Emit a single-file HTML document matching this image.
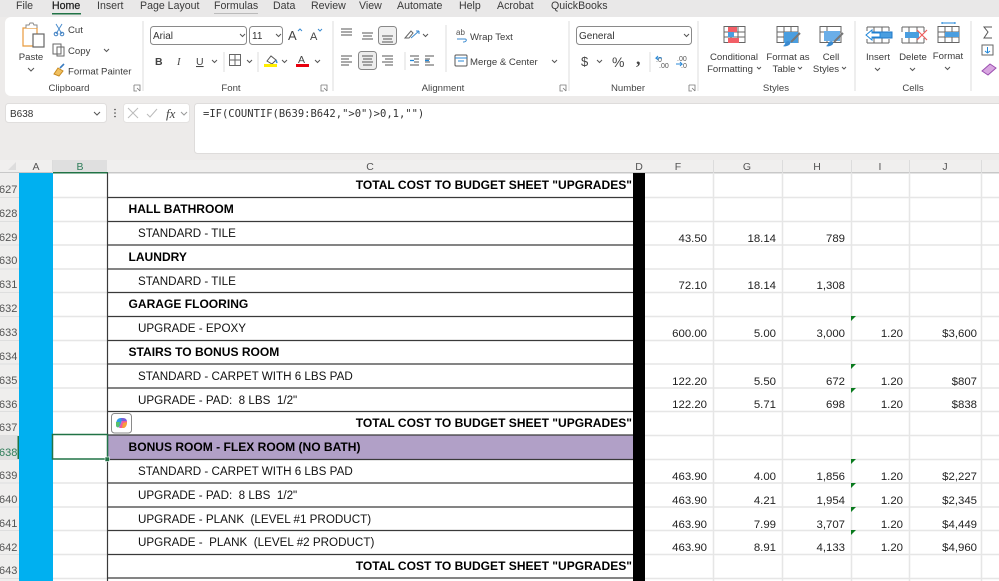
<!DOCTYPE html>
<html><head><meta charset="utf-8"><style>
html,body{margin:0;padding:0;background:#fff;width:999px;height:581px;overflow:hidden}
svg{display:block;font-family:"Liberation Sans",sans-serif}
.u{font-size:9.6px;fill:#3c3c3c}
.t{font-size:10.6px;fill:#3a3a3a}
.g{font-size:9.6px;fill:#444;text-anchor:middle}
.c{font-size:10.5px;fill:#555;text-anchor:middle}
.r{font-size:11px;fill:#555}
.b{font-size:12.05px;font-weight:bold;fill:#000}
.l{font-size:11.65px;fill:#111}
.n{font-size:11.4px;fill:#222;text-anchor:end}
.ic{fill:none;stroke:#555;stroke-width:1}
.gl{stroke:#e6e6e6;stroke-width:1.5}
.bl{stroke:#3a3a3a;stroke-width:1.2}
.sep{stroke:#dcdcdc;stroke-width:1}
.tri{fill:#0a7a1e}
</style></head><body>
<svg width="999" height="581" viewBox="0 0 999 581" xmlns="http://www.w3.org/2000/svg">
<rect width="999" height="160" fill="#edebea"/>
<rect y="0" width="999" height="17" fill="#e9e8e8"/>
<g class="t">
<text x="16" y="9">File</text><text x="52" y="9" style="fill:#222;stroke:#222;stroke-width:.25">Home</text><text x="97" y="9">Insert</text><text x="140" y="9">Page Layout</text><text x="214" y="9">Formulas</text><text x="273" y="9">Data</text><text x="311" y="9">Review</text><text x="359" y="9">View</text><text x="397" y="9">Automate</text><text x="459" y="9">Help</text><text x="497" y="9">Acrobat</text><text x="551" y="9">QuickBooks</text>
</g>
<rect x="52" y="13" width="29" height="1.5" fill="#217346"/>
<rect x="214" y="13" width="44" height="1" fill="#bbb"/>
<rect x="5" y="17" width="1010" height="79" rx="6" fill="#fff"/>
<g class="sep"><path d="M143 21V91M333 21V91M569 21V91M698 21V91M855 21V91M971 21V91"/></g>

<!-- Clipboard -->
<path d="M23 28h14v18h-14z" fill="none" stroke="#e89a3c" stroke-width="1.2"/>
<path d="M26 28v-3h3l1-2h3l1 2h3v3" fill="#fff" stroke="#888"/>
<rect x="33" y="34" width="11" height="13" fill="#fff" stroke="#666" stroke-width="1.2"/>
<text class="u" x="31" y="60" text-anchor="middle">Paste</text>
<path d="M28 68l3 3 3-3" class="ic"/>
<path d="M56 24l6 10M62 24l-6 10" stroke="#4a8ccc" fill="none"/><circle cx="56" cy="34" r="1.8" fill="none" stroke="#3a7cc0"/><circle cx="62" cy="34" r="1.8" fill="none" stroke="#3a7cc0"/>
<text class="u" x="68" y="33">Cut</text>
<path d="M53 44h8v10h-8zM57 47h7v9h-7z" fill="#fff" stroke="#666"/>
<text class="u" x="68" y="54">Copy</text><path d="M104 49l2.5 2.5 2.5-2.5" class="ic"/>
<path d="M54 74l4-6 5 3-4 5z" fill="#f0c060" stroke="#c88a20"/><path d="M60 68l4-4" stroke="#3a7cc0" stroke-width="1.6"/>
<text class="u" x="68" y="74.500">Format Painter</text>
<text class="g" x="69" y="91">Clipboard</text>
<path d="M134 85h6v6M134 85v6h3M137 88l3 3" fill="none" stroke="#777" stroke-width=".8"/>

<!-- Font -->
<rect x="150.500" y="26.500" width="96" height="18" rx="3" fill="#fff" stroke="#8a8a8a"/>
<text x="153" y="39" style="font-size:10px;fill:#333">Arial</text><path d="M240 34l2.500 2.500 2.500-2.500" class="ic"/>
<rect x="249.500" y="26.500" width="33" height="18" rx="3" fill="#fff" stroke="#8a8a8a"/>
<text x="252" y="39" style="font-size:10px;fill:#333">11</text><path d="M276 34l2.500 2.500 2.500-2.500" class="ic"/>
<text x="288" y="40" style="font-size:13px;fill:#444">A</text><path d="M298 31l2-2 2 2" stroke="#3a8ad0" fill="none"/>
<text x="310" y="40" style="font-size:11px;fill:#444">A</text><path d="M318 29l2 2 2-2" stroke="#3a8ad0" fill="none"/>
<text x="155" y="65" style="font-size:10.500px;font-weight:bold;fill:#444">B</text>
<text x="177" y="65" style="font-size:10.500px;font-style:italic;fill:#444;font-family:'Liberation Serif',serif">I</text>
<text x="196" y="65" style="font-size:10.500px;fill:#444;text-decoration:underline">U</text><path d="M212 60l2.500 2.500 2.500-2.500" class="ic"/>
<path d="M224 52V72" stroke="#ddd"/>
<path d="M229.500 54.500h11v11h-11zM235 54.500v11M229.500 60h11" fill="none" stroke="#666"/><path d="M247 60l2.500 2.500 2.500-2.500" class="ic"/>
<path d="M258 52V72" stroke="#ddd"/>
<path d="M267 61l4-5 5 4-4 4z" fill="#fff" stroke="#555"/><path d="M276 60l1 3" stroke="#3a8ad0" stroke-width="1.500"/><rect x="264" y="64" width="13" height="3" fill="#ffee00"/>
<path d="M282 60l2.500 2.500 2.500-2.500" class="ic"/>
<text x="298" y="63" style="font-size:10.500px;fill:#444">A</text><rect x="296" y="64" width="13" height="3" fill="#e8000d"/>
<path d="M315 60l2.500 2.500 2.500-2.500" class="ic"/>
<text class="g" x="231" y="91">Font</text>
<path d="M321 85h6v6M321 85v6h3M324 88l3 3" fill="none" stroke="#777" stroke-width=".8"/>

<!-- Alignment -->
<g stroke="#555" fill="none">
<path d="M341 30h11M341 33h11M341 36h11" stroke-width=".9" transform="translate(0,-1)"/>
<path d="M362 33h11M363 36h9M362 39h11" stroke-width=".9"/>
<rect x="378.500" y="26.500" width="18" height="18" rx="3" fill="#f0f0f0" stroke="#888"/>
<path d="M382 36h11M383 39h9M382 42h11" stroke-width=".9"/>
<path d="M341 56h11M341 59h8M341 62h11M341 65h8" stroke-width=".9"/>
<rect x="358.500" y="51.500" width="18" height="18" rx="3" fill="#ededed" stroke="#888"/>
<path d="M362 56h11M363 59h9M362 62h11M363 65h9" stroke-width=".9"/>
<path d="M382 56h11M385 59h8M382 62h11M385 65h8" stroke-width=".9"/>
<path d="M405 52V70" stroke="#ddd"/>
<path d="M410 56h9M414 59h5M414 62h5M410 65h9M425 56h9M425 59h5M425 62h5M425 65h9" stroke-width=".9"/>
<path d="M405 38l6-7 2 2-4 5z" stroke="#666"/><path d="M411 38l8-7M419 31h-3M419 31v3" stroke="#3a8ad0"/>
<path d="M423 34l2.500 2.500 2.500-2.500"/>
</g>
<path d="M410 60.500h4M425 60.500h4" stroke="#1f86d8" stroke-width="1.200"/>
<path d="M446 25V72" stroke="#ddd"/>
<text x="456" y="35" style="font-size:8px;fill:#555">ab</text><path d="M457 39h8M465 39c2 0 2 3-2 3" stroke="#3a8ad0" fill="none"/>
<text x="470" y="40" class="u">Wrap Text</text>
<rect x="455" y="55" width="12" height="11" rx="1" fill="#fff" stroke="#555"/><path d="M455 58h12M458 61h6" stroke="#2a8ad8"/>
<text x="470" y="65" class="u">Merge &amp; Center</text><path d="M552 60l2.500 2.500 2.500-2.500" class="ic"/>
<text class="g" x="443" y="91">Alignment</text>
<path d="M560 85h6v6M560 85v6h3M563 88l3 3" fill="none" stroke="#777" stroke-width=".8"/>

<!-- Number -->
<rect x="576.500" y="26.500" width="115" height="18" rx="3" fill="#fff" stroke="#8a8a8a"/>
<text x="579" y="39" style="font-size:10px;fill:#333">General</text><path d="M684 34l2.500 2.500 2.500-2.500" class="ic"/>
<text x="581" y="66" style="font-size:13px;fill:#444">$</text><path d="M597 60l2.500 2.500 2.500-2.500" class="ic"/>
<text x="612" y="67" style="font-size:14px;fill:#444">%</text>
<text x="636" y="64" style="font-size:18px;font-weight:bold;fill:#444;font-family:'Liberation Serif',serif">,</text>
<path d="M650 52V72" stroke="#ddd"/>
<text x="656" y="62" style="font-size:7px;fill:#555">.0</text><text x="659" y="68" style="font-size:7px;fill:#555">.00</text><path d="M662 58h-6l2-2M656 58l2 2" stroke="#2a8ad8" fill="none"/>
<text x="677" y="61" style="font-size:7px;fill:#555">.00</text><text x="681" y="68" style="font-size:7px;fill:#555">.0</text><path d="M676 64h6l-2-2M682 64l-2 2" stroke="#2a8ad8" fill="none"/>
<text class="g" x="628" y="91">Number</text>
<path d="M689 85h6v6M689 85v6h3M692 88l3 3" fill="none" stroke="#777" stroke-width=".8"/>

<!-- Styles -->
<g stroke="#666" fill="none">
<path d="M724 26.500h21v16h-21zM731 26.500v16M738 26.500v16M724 32h21M724 37h21"/>
<rect x="728" y="27" width="9" height="5" fill="#f25f67" stroke="none"/><rect x="728" y="32" width="6" height="5" fill="#4a9ee0" stroke="none"/><rect x="728" y="38" width="11" height="5" fill="#f25f67" stroke="none"/>
<path d="M777 26.500h21v16h-21zM784 26.500v16M791 26.500v16M777 32h21M777 37h21"/>
<rect x="784" y="32" width="14" height="11" fill="#4a9ee0" stroke="none"/>
<path d="M800 33l-9 9" stroke="#777" stroke-width="2"/><path d="M786 42c3-2 5 0 4 2s-6 3-7 2c2-1 2-3 3-4z" fill="#3a8ad0" stroke="none"/>
<path d="M820 26.500h21v16h-21zM827 26.500v16M820 32h21"/>
<rect x="824" y="31" width="16" height="10" fill="#6aaee8" stroke="none"/>
<path d="M843 33l-9 9" stroke="#777" stroke-width="2"/><path d="M829 42c3-2 5 0 4 2s-6 3-7 2c2-1 2-3 3-4z" fill="#3a8ad0" stroke="none"/>
</g>
<g class="u" text-anchor="middle">
<text x="734" y="60">Conditional</text><text x="730" y="72">Formatting</text>
<text x="788" y="60">Format as</text><text x="784" y="72">Table</text>
<text x="831" y="60">Cell</text><text x="826" y="72">Styles</text>
</g>
<path d="M757 67l2 2 2-2M798 67l2 2 2-2M842 67l2 2 2-2" class="ic"/>
<text class="g" x="776" y="91">Styles</text>

<!-- Cells -->
<g stroke="#666" fill="none">
<path d="M867 27h22M867 43h22M867 27v4M889 27v4M867 39v4M889 39v4M874 27v16M882 27v16"/>
<rect x="873" y="32" width="19" height="6" fill="#4a9ee0" stroke="#1f78c8"/>
<path d="M866 35l6-5v3h8v4h-8v3z" fill="#fff" stroke="#1f86d8"/>
<path d="M902 27h22M902 43h22M902 27v5M924 27v5M902 38v5M924 38v5M909 27v16M917 27v16"/>
<rect x="905" y="32" width="14" height="6" fill="#4a9ee0" stroke="none"/>
<path d="M917 30l10 10M927 30l-10 10" stroke="#ee5c5c" stroke-width="1.200"/>
<path d="M938 26.500h21v16h-21zM945 26.500v16M952 26.500v16M938 32h21M938 37h21"/>
<rect x="945" y="32" width="14" height="5" fill="#4a9ee0" stroke="none"/>
<path d="M942 23h13M942 22v2M955 22v2" stroke="#1f86d8"/>
</g>
<g class="u" text-anchor="middle"><text x="878" y="60">Insert</text><text x="913" y="60">Delete</text><text x="948" y="59">Format</text></g>
<path d="M875 68l2.500 2.500 2.500-2.500M910 68l2.500 2.500 2.500-2.500M945 67l2.500 2.500 2.500-2.500" class="ic"/>
<text class="g" x="913" y="91">Cells</text>

<!-- Editing -->
<path d="M992 27h-8l4 5-4 6h8" fill="none" stroke="#555"/>
<rect x="982" y="45" width="11" height="10" fill="#fff" stroke="#666"/><path d="M987.500 47v6M985 51l2.500 2 2.500-2" stroke="#1f86d8" fill="none"/>
<path d="M982 71l8-7 6 4-8 7z" fill="#d8a6e0" stroke="#9a4fb0"/>

<!-- Formula bar -->
<rect x="5.500" y="103.500" width="101" height="19" rx="3" fill="#fff" stroke="#e0dedd"/>
<text x="10" y="117" style="font-size:10px;fill:#333">B638</text><path d="M94 112l3 3 3-3" class="ic"/>
<circle cx="115" cy="109.500" r=".8" fill="#444"/><circle cx="115" cy="113" r=".8" fill="#444"/><circle cx="115" cy="116.500" r=".8" fill="#444"/>
<rect x="123.500" y="103.500" width="66" height="19" rx="3" fill="#fff" stroke="#e4e2e1"/>
<path d="M128 108l10 10M138 108l-10 10M147 114l3 3 7-8" fill="none" stroke="#bbb"/>
<text x="166" y="118" style="font-size:13px;font-style:italic;fill:#444;font-family:'Liberation Serif',serif">fx</text><path d="M181 112l3 3 3-3" fill="none" stroke="#999"/>
<rect x="194.500" y="103.500" width="830" height="50" rx="3" fill="#fff" stroke="#dedcdb"/>
<text x="203" y="117" style="font-family:'DejaVu Sans Mono',monospace;font-size:10.500px;fill:#333">=IF(COUNTIF(B639:B642,"&gt;0")&gt;0,1,"")</text>

<!-- Column headers -->
<rect y="160" width="999" height="13" fill="#f0efee"/>
<rect x="0" y="172" width="999" height="1.500" fill="#c8c8c8"/>
<path d="M16 162v8h-8z" fill="#ddd"/>
<rect x="53" y="160" width="54" height="13" fill="#dfdfdf"/>
<rect x="53" y="172" width="55" height="1.500" fill="#217346"/>
<path d="M52.500 160v13M713.500 160v13M782.500 160v13M851.500 160v13M909.500 160v13M981.500 160v13" stroke="#dcdcdc"/>
<text class="c" x="36" y="170">A</text><text class="c" x="80" y="170" style="fill:#2f7d5a">B</text><text class="c" x="370" y="170">C</text><text class="c" x="639" y="170">D</text><text class="c" x="678" y="170">F</text><text class="c" x="747" y="170">G</text><text class="c" x="817" y="170">H</text><text class="c" x="880" y="170">I</text><text class="c" x="945" y="170">J</text>

<!-- Row headers -->
<rect x="0" y="173" width="19" height="408" fill="#efeeed"/>
<rect x="0" y="435" width="18" height="24" fill="#dfdfdf"/>
<rect x="17.500" y="435" width="1.500" height="24" fill="#217346"/>
<g class="r">
<text x="-1" y="193">627</text><text x="-1" y="217">628</text><text x="-1" y="241">629</text><text x="-1" y="264">630</text><text x="-1" y="288">631</text><text x="-1" y="312">632</text><text x="-1" y="336">633</text><text x="-1" y="360">634</text><text x="-1" y="384">635</text><text x="-1" y="408">636</text><text x="-1" y="431">637</text><text x="-1" y="456" style="fill:#2f7d5a">638</text><text x="-1" y="479">639</text><text x="-1" y="503">640</text><text x="-1" y="527">641</text><text x="-1" y="551">642</text><text x="-1" y="574">643</text>
</g>
<path class="sep" d="M0 197.500h19M0 221.500h19M0 245h19M0 269h19M0 292.500h19M0 316.500h19M0 340.500h19M0 364h19M0 388h19M0 411.500h19M0 435.500h19M0 459.500h19M0 483h19M0 507h19M0 530.500h19M0 554.500h19M0 578.500h19" style="stroke:#dedede"/>

<!-- Blue column A -->
<rect x="19" y="173" width="34" height="408" fill="#00b0f0"/>

<!-- Gridlines -->
<g class="gl">
<path d="M53 197.500h54M53 221.500h54M53 245h54M53 269h54M53 292.500h54M53 316.500h54M53 340.500h54M53 364h54M53 388h54M53 411.500h54M53 483h54M53 507h54M53 530.500h54M53 554.500h54M53 578.500h54"/>
<path d="M645 197.500h354M645 221.500h354M645 245h354M645 269h354M645 292.500h354M645 316.500h354M645 340.500h354M645 364h354M645 388h354M645 411.500h354M645 435.500h354M645 459.500h354M645 483h354M645 507h354M645 530.500h354M645 554.500h354M645 578.500h354"/>
<path d="M713.500 173v408M782.500 173v408M851.500 173v408M909.500 173v408M981.500 173v408"/>
</g>

<!-- Column C -->
<rect x="108" y="435" width="525" height="24" fill="#b1a0c7"/>
<g class="bl">
<path d="M107.500 173v408"/>
<path d="M108 197.500h525M108 221.500h525M108 245h525M108 269h525M108 292.500h525M108 316.500h525M108 340.500h525M108 364h525M108 388h525M108 411.500h525M108 435h525M108 459.500h525M108 483h525M108 507h525M108 530.500h525M108 554.500h525M108 578h525"/>
</g>
<rect x="633" y="173" width="12" height="408" fill="#000"/>

<g class="b">
<text x="632" y="189" text-anchor="end">TOTAL COST TO BUDGET SHEET "UPGRADES"</text>
<text x="128.500" y="213">HALL BATHROOM</text>
<text x="128.500" y="261">LAUNDRY</text>
<text x="128.500" y="308">GARAGE FLOORING</text>
<text x="128.500" y="356">STAIRS TO BONUS ROOM</text>
<text x="632" y="427" text-anchor="end">TOTAL COST TO BUDGET SHEET "UPGRADES"</text>
<text x="128.500" y="451">BONUS ROOM - FLEX ROOM (NO BATH)</text>
<text x="632" y="570" text-anchor="end">TOTAL COST TO BUDGET SHEET "UPGRADES"</text>
</g>
<g class="l">
<text x="138" y="237">STANDARD - TILE</text>
<text x="138" y="285">STANDARD - TILE</text>
<text x="138" y="332">UPGRADE - EPOXY</text>
<text x="138" y="380">STANDARD - CARPET WITH 6 LBS PAD</text>
<text x="138" y="404" xml:space="preserve">UPGRADE - PAD:  8 LBS  1/2"</text>
<text x="138" y="475">STANDARD - CARPET WITH 6 LBS PAD</text>
<text x="138" y="499" xml:space="preserve">UPGRADE - PAD:  8 LBS  1/2"</text>
<text x="138" y="523" xml:space="preserve">UPGRADE - PLANK  (LEVEL #1 PRODUCT)</text>
<text x="138" y="546" xml:space="preserve">UPGRADE -  PLANK  (LEVEL #2 PRODUCT)</text>
</g>

<!-- Numbers -->
<g class="n">
<text x="707" y="242">43.50</text><text x="776" y="242">18.14</text><text x="845" y="242">789</text>
<text x="707" y="289">72.10</text><text x="776" y="289">18.14</text><text x="845" y="289">1,308</text>
<text x="707" y="337">600.00</text><text x="776" y="337">5.00</text><text x="845" y="337">3,000</text><text x="903" y="337">1.20</text><text x="977" y="337">$3,600</text>
<text x="707" y="385">122.20</text><text x="776" y="385">5.50</text><text x="845" y="385">672</text><text x="903" y="385">1.20</text><text x="977" y="385">$807</text>
<text x="707" y="408">122.20</text><text x="776" y="408">5.71</text><text x="845" y="408">698</text><text x="903" y="408">1.20</text><text x="977" y="408">$838</text>
<text x="707" y="480">463.90</text><text x="776" y="480">4.00</text><text x="845" y="480">1,856</text><text x="903" y="480">1.20</text><text x="977" y="480">$2,227</text>
<text x="707" y="504">463.90</text><text x="776" y="504">4.21</text><text x="845" y="504">1,954</text><text x="903" y="504">1.20</text><text x="977" y="504">$2,345</text>
<text x="707" y="528">463.90</text><text x="776" y="528">7.99</text><text x="845" y="528">3,707</text><text x="903" y="528">1.20</text><text x="977" y="528">$4,449</text>
<text x="707" y="551">463.90</text><text x="776" y="551">8.91</text><text x="845" y="551">4,133</text><text x="903" y="551">1.20</text><text x="977" y="551">$4,960</text>
</g>
<g class="tri">
<path d="M851 316h5l-5 5z"/><path d="M851 364h5l-5 5z"/><path d="M851 388h5l-5 5z"/><path d="M851 459h5l-5 5z"/><path d="M851 483h5l-5 5z"/><path d="M851 507h5l-5 5z"/><path d="M851 530h5l-5 5z"/>
</g>

<!-- Selected cell -->
<rect x="52.500" y="434.500" width="55" height="24.500" fill="#fff" stroke="#217346" stroke-width="1.500"/>
<rect x="105" y="457" width="4.500" height="4.500" fill="#217346" stroke="#fff" stroke-width=".6"/>

<!-- Copilot button -->
<rect x="111.500" y="413.500" width="20" height="19.500" rx="3" fill="#fff" stroke="#8a8a8a"/>
<path d="M116 425c0-5 2-7 5-7h2l-3 8c-1 2-4 2-4-1z" fill="#2f9be8"/>
<path d="M121 418h2c3 0 4 2 4 4l-5 0z" fill="#7b5fd8"/>
<path d="M127 421c0 5-2 7-5 7h-3l3-7z" fill="#ef5aa0"/>
<path d="M116 422l4 0-1 5c-2 1-3-1-3-2z" fill="#58c06a"/>
<path d="M123 423l4-1c0 3-1 5-3 6h-2z" fill="#f6a13a"/>
</svg>
</body></html>
